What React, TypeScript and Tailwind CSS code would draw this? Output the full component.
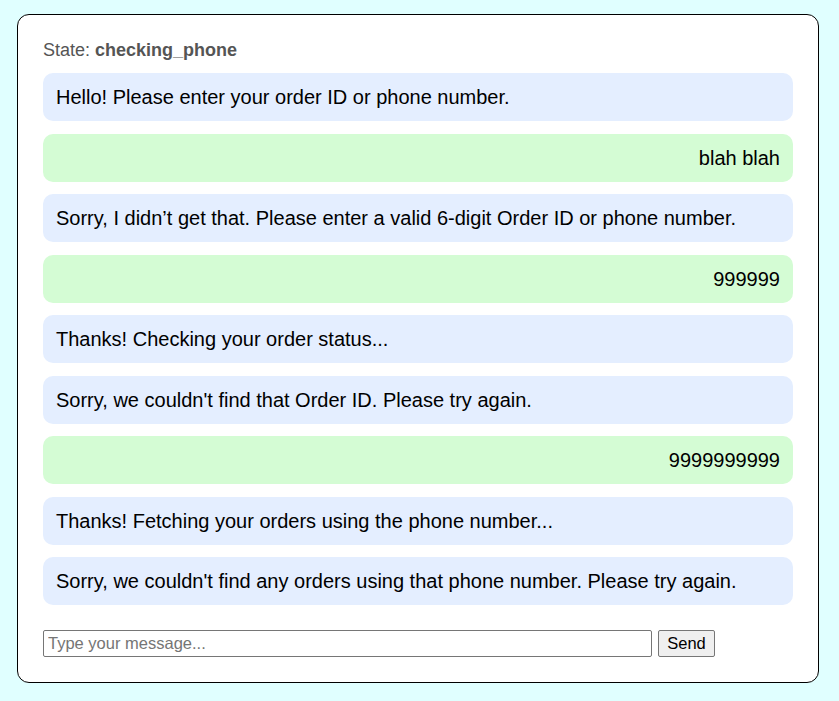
import React from 'react';

type Msg = { from: 'bot' | 'user'; text: string };

const messages: Msg[] = [
    { from: 'bot', text: 'Hello! Please enter your order ID or phone number.' },
    { from: 'user', text: 'blah blah' },
    { from: 'bot', text: 'Sorry, I didn’t get that. Please enter a valid 6-digit Order ID or phone number.' },
    { from: 'user', text: '999999' },
    { from: 'bot', text: 'Thanks! Checking your order status...' },
    { from: 'bot', text: "Sorry, we couldn't find that Order ID. Please try again." },
    { from: 'user', text: '9999999999' },
    { from: 'bot', text: 'Thanks! Fetching your orders using the phone number...' },
    { from: 'bot', text: "Sorry, we couldn't find any orders using that phone number. Please try again." },
];

const App: React.FC = () => {
    return (
        <div className="min-h-screen bg-[#e0ffff] pt-[14px] pl-[17px] font-['Liberation_Sans',Arial,sans-serif]">
            <div className="w-[802px] bg-white border border-black rounded-[12px] p-[25px]">
                <div className="text-[18px] leading-[20px] text-[#555]">
                    State: <span className="font-bold">checking_phone</span>
                </div>

                <div className="mt-[13px] flex flex-col gap-[12.5px]">
                    {messages.map((m, i) => (
                        <div
                            key={i}
                            className={
                                m.from === 'user'
                                    ? 'bg-[#d4fcd4] rounded-[10px] px-[13px] py-[12px] text-[20px] leading-[24px] text-black text-right'
                                    : 'bg-[#e4eeff] rounded-[10px] px-[13px] py-[12px] text-[20px] leading-[24px] text-black'
                            }
                        >
                            {m.text}
                        </div>
                    ))}
                </div>

                <div className="mt-[25px] flex items-center gap-[6px]">
                    <input
                        type="text"
                        placeholder="Type your message..."
                        className="w-[609px] h-[27px] border border-[#767676] rounded-[2px] px-[4px] text-[16.5px] placeholder:text-[#757575] outline-none"
                    />
                    <button className="h-[27px] w-[57px] bg-[#efefef] border border-[#767676] rounded-[2px] text-[16.5px] text-black">
                        Send
                    </button>
                </div>
            </div>
        </div>
    );
};

export default App;
